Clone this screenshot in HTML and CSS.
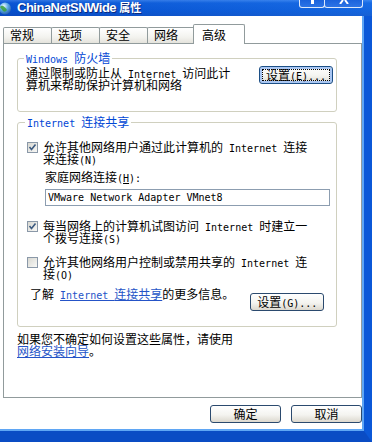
FILE: index.html
```html
<!DOCTYPE html>
<html>
<head>
	<meta charset="utf-8" />
	<title>ChinaNetSNWide 属性</title>
	<link rel="stylesheet" href="styles.css">
</head>
<body>
<div class="window">
	<div class="titlebar">
		<svg class="ticon" width="12" height="13" viewBox="0 0 12 13">
			<defs>
				<radialGradient id="gl" cx="0.4" cy="0.3" r="0.8">
					<stop offset="0" stop-color="#eef8ff"/>
					<stop offset="0.45" stop-color="#5aa8e8"/>
					<stop offset="1" stop-color="#1a4fa0"/>
				</radialGradient>
			</defs>
			<circle cx="5" cy="6.5" r="6" fill="url(#gl)"/>
			<path d="M0 5 Q2 3 4 4.5 T7 8 Q5 11 3 9 Z" fill="#3aa03a" opacity="0.85"/>
		</svg>
		<span class="title">ChinaNetSNWide <span class="zh">属性</span></span>
		<div class="ctls">
			<div class="ctl help"><i></i></div>
			<div class="ctl close">
				<svg width="10" height="4" viewBox="0 0 10 4"><path d="M4 0 L1 4 M6 0 L9 4" stroke="#fff" stroke-width="2"/></svg>
			</div>
		</div>
	</div>

	<div class="frame">
		<ul class="tabs">
			<li>常规</li>
			<li>选项</li>
			<li>安全</li>
			<li>网络</li>
			<li class="on">高级</li>
		</ul>

		<div class="panel">
			<fieldset class="group g1">
				<legend><span class="en">Windows </span>防火墙</legend>
				<div class="fw">
					<p>通过限制或防止从<span class="en"> Internet </span>访问此计<br>算机来帮助保护计算机和网络</p>
					<button class="btn def">设置<span class="en">(E)...</span></button>
				</div>
			</fieldset>

			<fieldset class="group g2">
				<legend><span class="en">Internet </span>连接共享</legend>
				<div class="cbrow">
					<span class="cb checked"><svg width="9" height="9" viewBox="0 0 9 9"><path d="M1.5 4 L3.5 6.5 L7.5 1.5" fill="none" stroke="#3c5a80" stroke-width="1.6"/></svg></span>
					<p>允许其他网络用户通过此计算机的<span class="en"> Internet </span>连接<br>来连接<span class="en">(N)</span></p>
				</div>
				<p class="sub">家庭网络连接<span class="en">(<u>H</u>):</span></p>
				<input class="field" type="text" value="VMware Network Adapter VMnet8">
				<div class="cbrow r2">
					<span class="cb checked"><svg width="9" height="9" viewBox="0 0 9 9"><path d="M1.5 4 L3.5 6.5 L7.5 1.5" fill="none" stroke="#3c5a80" stroke-width="1.6"/></svg></span>
					<p>每当网络上的计算机试图访问<span class="en"> Internet </span>时建立一<br>个拨号连接<span class="en">(S)</span></p>
				</div>
				<div class="cbrow r3">
					<span class="cb"></span>
					<p>允许其他网络用户控制或禁用共享的<span class="en"> Internet </span>连<br>接<span class="en">(O)</span></p>
				</div>
				<div class="more">
					<p>了解<span class="en"> </span><a href="#"><span class="en">Internet </span>连接共享</a>的更多信息。</p>
					<button class="btn">设置<span class="en">(G)...</span></button>
				</div>
			</fieldset>

			<p class="note">如果您不确定如何设置这些属性，请使用<br><a href="#">网络安装向导</a>。</p>
		</div>

		<div class="actions">
			<button class="btn wide">确定</button>
			<button class="btn wide">取消</button>
		</div>
	</div>
</div>
</body>
</html>
```

FILE: styles.css
```css
* {
	margin: 0;
	padding: 0;
	box-sizing: border-box;
}

body {
	width: 372px;
	height: 442px;
	overflow: hidden;
	background: #fff;
	color: #000;
	font-family: "Noto Sans CJK SC", sans-serif;
	font-size: 12px;
	line-height: 12px;
}

/* 宋体里的西文是半角等宽 */
.en {
	font-family: "DejaVu Sans Mono", monospace;
	font-size: 10px;
	line-height: 0;
}

.window {
	display: flex;
	flex-direction: column;
	height: 442px;
}

/* 标题栏 */
.titlebar {
	height: 16px;
	display: flex;
	align-items: flex-start;
	background:
		linear-gradient(to right, rgba(0, 40, 160, 0.15), rgba(60, 150, 255, 0.25)),
		linear-gradient(to bottom, #3a82ec 0, #0c5ddc 3px, #0656d6 10px, #0a4fc6 16px);
}

.ticon {
	flex: none;
	margin-top: 2px;
}

.title {
	margin-left: 5px;
	color: #fff;
	font-family: "Liberation Sans", sans-serif;
	font-weight: bold;
	font-size: 13px;
	letter-spacing: -0.5px;
	line-height: 15px;
	text-shadow: 1px 1px 0 #0a2a80;
}

.title .zh {
	font-family: "Noto Sans CJK SC", sans-serif;
	font-size: 11px;
	letter-spacing: 0;
	line-height: 0;
}

.ctls {
	display: flex;
	margin-left: auto;
	margin-right: 9px;
}

.ctl {
	height: 8px;
	display: flex;
	justify-content: center;
	border: 1px solid #dce8fa;
	border-top: none;
	border-radius: 0 0 3px 3px;
	background: linear-gradient(to bottom, #1a62dc, #2c74e6);
}

.help {
	width: 26px;
}

.help i {
	width: 3px;
	height: 4px;
	background: #fff;
}

.close {
	width: 39px;
	margin-left: -1px;
}

/* 窗口边框 */
.frame {
	flex: 1;
	background: #fff;
	border-right: 8px solid #0b58d8;
	border-bottom: 11px solid #0a4cc4;
	box-shadow: inset -2px -2px 0 #5fa6f4;
}

/* 选项卡 */
.tabs {
	display: flex;
	align-items: flex-end;
	list-style: none;
	height: 27px;
	padding-left: 3px;
}

.tabs li {
	width: 49px;
	height: 16px;
	margin-left: -1px;
	padding: 1px 0 0 6px;
	border: 1px solid #919b9c;
	border-bottom: none;
	border-radius: 2px 2px 0 0;
	background: linear-gradient(to bottom, #ffffff, #f3f3ef 60%, #e4e3dc);
}

.tabs li:first-child {
	margin-left: 0;
}

.tabs li.on {
	position: relative;
	z-index: 1;
	width: 52px;
	height: 20px;
	margin-left: -3px;
	margin-bottom: -1px;
	padding: 4px 0 0 8px;
	background: #fff;
}

.panel {
	width: 359px;
	height: 355px;
	margin-left: 3px;
	padding-left: 13px;
	border: 1px solid #919b9c;
}

/* 分组框 */
.group {
	width: 320px;
	border: 1px solid #d0d0bf;
	border-radius: 3px;
}

.group legend {
	color: #0046d5;
	padding: 0 2px;
	margin-left: -2px;
}

.g1 {
	margin-top: 8px;
	padding: 3px 3px 20px 8px;
}

.fw {
	display: flex;
	justify-content: space-between;
	align-items: flex-start;
}

.fw .btn {
	margin-top: -1px;
}

.g2 {
	margin-top: 4px;
	padding: 13px 3px 15px 9px;
}

.cbrow {
	display: flex;
	gap: 5px;
}

.cb {
	flex: none;
	width: 11px;
	height: 11px;
	margin-top: 1px;
	border: 1px solid #8a98a8;
	background: linear-gradient(135deg, #d8d8d2, #f8f8f6);
}

.cb svg {
	display: block;
}

.sub {
	margin: 6px 0 0 18px;
}

.sub u {
	text-decoration: underline;
}

.field {
	display: block;
	width: 285px;
	height: 17px;
	margin: 6px 0 0 18px;
	padding: 0 2px;
	border: 1px solid #8c9db0;
	font-family: "DejaVu Sans Mono", monospace;
	font-size: 10px;
	color: #000;
	outline: none;
}

.r2 {
	margin-top: 14px;
}

.r3 {
	margin-top: 12px;
}

.more {
	display: flex;
	align-items: flex-start;
	margin-top: 8px;
	padding-left: 3px;
}

.more .btn {
	margin: 5px 0 0 16px;
}

a {
	color: #2554c7;
	text-decoration: underline;
}

.note {
	margin-top: 6px;
}

/* 按钮 */
.btn {
	width: 74px;
	height: 18px;
	padding: 0;
	border: 1px solid #2b4a6e;
	border-radius: 3px;
	background: linear-gradient(to bottom, #ffffff, #f4f4f0 55%, #dcd8ce);
	color: #000;
	font-family: inherit;
	font-size: 12px;
	line-height: 12px;
}

.btn.def {
	border-color: #1c4f86;
	box-shadow: inset 0 0 0 2px #a9c6f2;
	outline: 1px dotted #000;
	outline-offset: -4px;
}

.actions {
	display: flex;
	justify-content: flex-end;
	gap: 10px;
	margin-top: 7px;
	padding-right: 2px;
}

.btn.wide {
	width: 71px;
}
```
